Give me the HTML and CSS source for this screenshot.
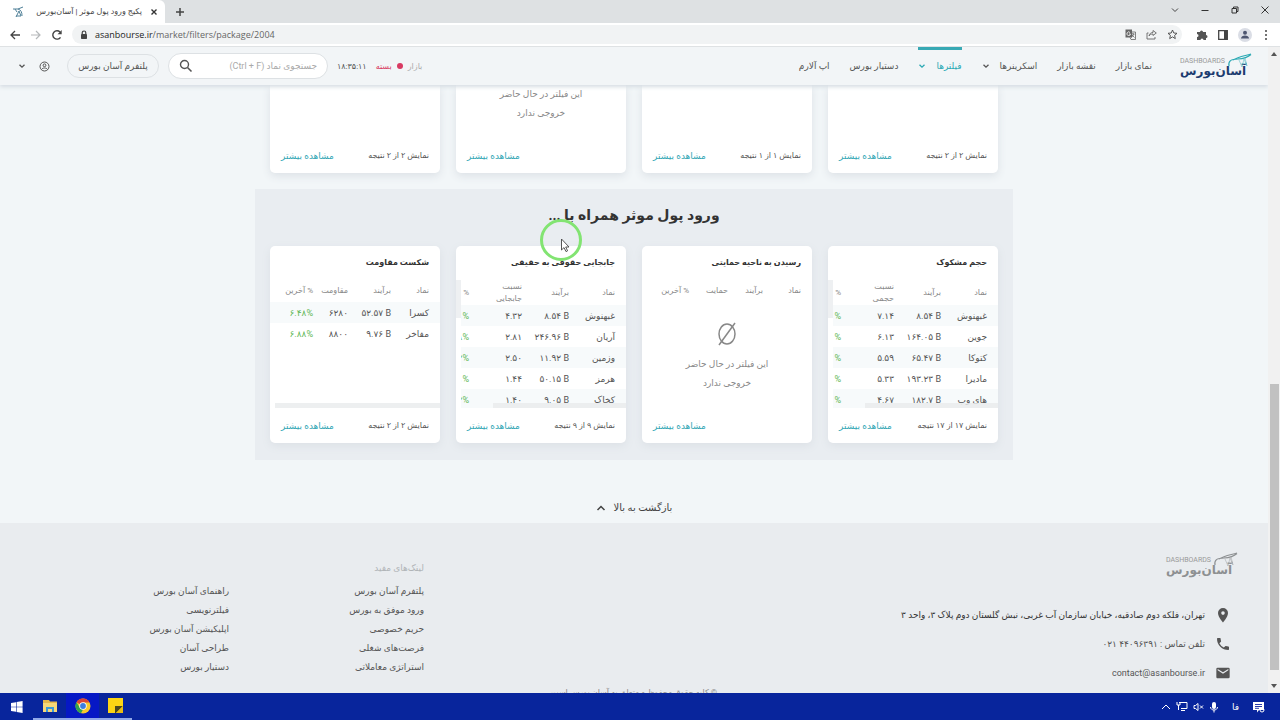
FILE: index.html
```html
<!DOCTYPE html>
<html lang="fa">
<head>
<meta charset="utf-8">
<meta name="viewport" content="width=device-width, initial-scale=1">
<title>پکیج ورود پول موثر | آسان‌بورس</title>
<link rel="stylesheet" href="styles.css">
</head>
<body>
<svg class="defs" aria-hidden="true">
  <symbol id="chev" viewBox="0 0 8 8"><path d="M1.5 2.7 4 5.2l2.500-2.500" fill="none" stroke="currentColor" stroke-width="1.300"/></symbol>
  <symbol id="bird" viewBox="0 0 26 22"><path d="M3 13C2 8 5 6 12 6c5-.3 9-1 13-4.500M7 7c5-3 9-3.500 18-6" fill="none" stroke="currentColor" stroke-width="1.200"/><path d="m13 7 3 7 2-8 3 7-2-8M15 11l6-1" fill="none" stroke="currentColor" stroke-width=".6" opacity=".7"/></symbol>
</svg>

<div class="tabstrip">
  <div class="tab">
    <svg class="favicon" width="12" height="12" viewBox="0 0 12 12"><path d="M1 3h5l5-2M3 3l2 3M6 3c3 1 4 3 4 7M4 11l3-6 2 5H4" fill="none" stroke="#4f8098"/></svg>
    <span class="tab-title" dir="rtl">پکیج ورود پول موثر | آسان‌بورس</span>
    <button class="plain" aria-label="Close tab"><svg width="8" height="8" viewBox="0 0 8 8"><path d="m1.500 1.500 5 5m0-5-5 5" stroke="#333" stroke-width="1.400"/></svg></button>
  </div>
  <button class="plain newtab" aria-label="New tab"><svg width="10" height="10" viewBox="0 0 10 10"><path d="M5 1v8M1 5h8" stroke="#444" stroke-width="1.500"/></svg></button>
  <div class="window-buttons">
    <button class="plain" aria-label="Search tabs"><svg width="10" height="10" viewBox="0 0 10 10"><path d="m2 3.500 3 3 3-3" fill="none" stroke="#444"/></svg></button>
    <button class="plain" aria-label="Minimize"><svg width="10" height="10" viewBox="0 0 10 10"><path d="M1.500 5.500h7" stroke="#333"/></svg></button>
    <button class="plain" aria-label="Restore"><svg width="10" height="10" viewBox="0 0 10 10"><path d="M2 3.500h4.500V8H2zM3.500 3.500V2H8v4.500H6.500" fill="none" stroke="#333"/></svg></button>
    <button class="plain" aria-label="Close"><svg width="10" height="10" viewBox="0 0 10 10"><path d="m1.500 1.500 7 7m0-7-7 7" stroke="#333"/></svg></button>
  </div>
</div>

<div class="toolbar">
  <button class="plain" aria-label="Back"><svg width="12" height="12" viewBox="0 0 12 12"><path d="M11 6H2m4-4L2 6l4 4" fill="none" stroke="#444" stroke-width="1.300"/></svg></button>
  <button class="plain" aria-label="Forward"><svg width="12" height="12" viewBox="0 0 12 12"><path d="M1 6h9M6 2l4 4-4 4" fill="none" stroke="#b5b8ba" stroke-width="1.200"/></svg></button>
  <button class="plain" aria-label="Reload"><svg width="12" height="12" viewBox="0 0 12 12"><path d="M9.500 8.300A4.200 4.200 0 1 1 9 3" fill="none" stroke="#444" stroke-width="1.400"/><path d="M10.700 1v4.200H6.500z" fill="#444"/></svg></button>
  <div class="address">
    <svg width="8" height="10" viewBox="0 0 8 10"><path d="M2.200 4V2.800a1.800 1.800 0 0 1 3.600 0V4" fill="none" stroke="#444" stroke-width="1.200"/><rect x="1" y="4" width="6" height="5" rx=".7" fill="#444"/></svg>
    <div class="url"><span>asanbourse.ir</span>/market/filters/package/2004</div>
    <button class="plain" aria-label="Translate"><svg width="11" height="11" viewBox="0 0 11 11"><rect x=".5" y=".5" width="6.500" height="8" fill="#666"/><path d="M5 3h5.500v7.500H6L5 8.500M6.500 5h3M8 4v1M9 5 6.500 8.500M7 6l2.500 2.500" fill="none" stroke="#666" stroke-width=".8"/><path d="M5 3.500A1.800 1.800 0 1 0 5.500 5H4" fill="none" stroke="#fff" stroke-width=".8"/></svg></button>
    <button class="plain" aria-label="Share"><svg width="11" height="11" viewBox="0 0 11 11"><path d="M2.500 4H1v6h8V8M3 7c.5-2.500 2-3.500 4-3.500V1.500L10.300 4 7 6.500V5C5 5 4 5.500 3 7Z" fill="none" stroke="#666" stroke-width=".9"/></svg></button>
    <button class="plain" aria-label="Bookmark"><svg width="11" height="11" viewBox="0 0 11 11"><path d="m5.500 1 1.300 3 3.200.3-2.400 2.100.7 3.200-2.800-1.700-2.800 1.700.7-3.200L1 4.300 4.200 4z" fill="none" stroke="#444" stroke-width=".9"/></svg></button>
  </div>
  <div class="tools">
    <button class="plain" aria-label="Extensions"><svg width="12" height="12" viewBox="0 0 12 12"><path d="M1 3h3a1.500 1.500 0 1 1 3 0h3v3a1.500 1.500 0 1 1 0 3v2H7.500a1.500 1.500 0 0 0-3 0H1V8a1.500 1.500 0 0 0 0-3z" fill="#555"/></svg></button>
    <button class="plain" aria-label="Side panel"><svg width="12" height="12" viewBox="0 0 12 12"><path d="M1.700 1.700h8.600v8.600H1.700z" fill="none" stroke="#444" stroke-width="1.300"/><path d="M7 2h3.500v8H7z" fill="#444"/></svg></button>
    <button class="plain" aria-label="Profile"><svg width="14" height="14" viewBox="0 0 14 14"><circle cx="7" cy="7" r="7" fill="#dadde5"/><circle cx="7" cy="4.800" r="2" fill="#4d5570"/><path d="M3 10.500c0-4 8-4 8 0z" fill="#4d5570"/></svg></button>
    <button class="plain" aria-label="Menu"><svg width="10" height="12" viewBox="0 0 10 12" fill="#444"><circle cx="5" cy="2" r="1"/><circle cx="5" cy="6" r="1"/><circle cx="5" cy="10" r="1"/></svg></button>
  </div>
</div>

<div class="viewport">
  <div class="page" dir="rtl">
    <header class="site-header">
      <a class="logo" href="#" aria-label="آسان بورس">
        <small>DASHBOARDS</small><b>آسان‌بورس</b>
        <svg width="26" height="22"><use href="#bird"/></svg>
      </a>
      <nav class="nav">
        <a href="#">نمای بازار</a>
        <a href="#">نقشه بازار</a>
        <a href="#">اسکرینرها <svg width="8" height="8"><use href="#chev"/></svg></a>
        <a href="#" class="active">فیلترها <svg width="8" height="8"><use href="#chev"/></svg></a>
        <a href="#">دستیار بورس</a>
        <a href="#">اپ آلارم</a>
      </nav>
      <div class="market"><span class="muted">بازار</span><i class="dot"></i><span class="closed">بسته</span><time>۱۸:۳۵:۱۱</time></div>
      <div class="search">
        <input type="search" aria-label="جستجوی نماد" placeholder="جستجوی نماد (Ctrl + F)">
        <svg width="14" height="14" viewBox="0 0 14 14"><circle cx="5.500" cy="5.500" r="4" fill="none" stroke="#555" stroke-width="1.400"/><path d="m8.500 8.500 4 4" stroke="#555" stroke-width="1.600"/></svg>
      </div>
      <button class="platform">پلتفرم آسان بورس</button>
      <button class="plain account" aria-label="حساب کاربری">
        <svg width="11" height="11" viewBox="0 0 11 11"><circle cx="5.500" cy="5.500" r="4.500" fill="none" stroke="#555"/><circle cx="5.500" cy="4.300" r="1.400" fill="none" stroke="#555"/><path d="M2.500 8.500c1-2 5-2 6 0" fill="none" stroke="#555"/></svg>
        <svg width="8" height="8"><use href="#chev"/></svg>
      </button>
    </header>

    <main>
      <section class="group previous">
        <div class="cards">
          <article class="card"><footer><span>نمایش ۲ از ۲ نتیجه</span><a href="#">مشاهده بیشتر</a></footer></article>
          <article class="card"><footer><span>نمایش ۱ از ۱ نتیجه</span><a href="#">مشاهده بیشتر</a></footer></article>
          <article class="card"><p class="empty-text">این فیلتر در حال حاضر<br>خروجی ندارد</p><footer><a href="#">مشاهده بیشتر</a></footer></article>
          <article class="card"><footer><span>نمایش ۲ از ۲ نتیجه</span><a href="#">مشاهده بیشتر</a></footer></article>
        </div>
      </section>

      <section class="group current">
        <h2>ورود پول موثر همراه با ...</h2>
        <div class="cards">
          <article class="card">
            <h3>حجم مشکوک</h3>
            <div class="scroll wide">
              <table>
                <colgroup><col class="c-name"><col class="c-net"><col class="c-ratio"><col></colgroup>
                <thead><tr><th>نماد</th><th>برآیند</th><th>نسبت<br>حجمی</th><th>%</th></tr></thead>
                <tbody>
                  <tr><td>غبهنوش</td><td dir="ltr">۸.۵۴ B</td><td dir="ltr">۷.۱۴</td><td dir="ltr" class="up">%</td></tr>
                  <tr><td>جوین</td><td dir="ltr">۱۶۴.۰۵ B</td><td dir="ltr">۶.۱۳</td><td dir="ltr" class="up">%</td></tr>
                  <tr><td>کتوکا</td><td dir="ltr">۶۵.۴۷ B</td><td dir="ltr">۵.۵۹</td><td dir="ltr" class="up">%</td></tr>
                  <tr><td>مادیرا</td><td dir="ltr">۱۹۳.۲۳ B</td><td dir="ltr">۵.۳۳</td><td dir="ltr" class="up">%</td></tr>
                  <tr><td>های وب</td><td dir="ltr">۱۸۲.۷ B</td><td dir="ltr">۴.۶۷</td><td dir="ltr" class="up">%</td></tr>
                </tbody>
              </table>
              <i class="hthumb"></i><i class="vtrack"></i>
            </div>
            <footer><span>نمایش ۱۷ از ۱۷ نتیجه</span><a href="#">مشاهده بیشتر</a></footer>
          </article>

          <article class="card">
            <h3>رسیدن به ناحیه حمایتی</h3>
            <div class="scroll">
              <table>
                <colgroup><col class="c-short"><col class="c-level"><col class="c-support"><col></colgroup>
                <thead><tr><th>نماد</th><th>برآیند</th><th>حمایت</th><th>% آخرین</th></tr></thead>
              </table>
              <div class="empty">
                <svg width="20" height="24" viewBox="0 0 20 24"><ellipse cx="10" cy="12" rx="8" ry="10" fill="none" stroke="#888" stroke-width="1.500"/><path d="M2 23 18 1" stroke="#888" stroke-width="1.500"/></svg>
                <p class="empty-text">این فیلتر در حال حاضر<br>خروجی ندارد</p>
              </div>
            </div>
            <footer><a href="#">مشاهده بیشتر</a></footer>
          </article>

          <article class="card">
            <h3>جابجایی حقوقی به حقیقی</h3>
            <div class="scroll wide">
              <table>
                <colgroup><col class="c-name"><col class="c-net"><col class="c-ratio"><col></colgroup>
                <thead><tr><th>نماد</th><th>برآیند</th><th>نسبت<br>جابجایی</th><th>%</th></tr></thead>
                <tbody>
                  <tr><td>غبهنوش</td><td dir="ltr">۸.۵۴ B</td><td dir="ltr">۴.۳۲</td><td dir="ltr" class="up">۱%</td></tr>
                  <tr><td>آریان</td><td dir="ltr">۲۴۶.۹۶ B</td><td dir="ltr">۲.۸۱</td><td dir="ltr" class="up">۸%</td></tr>
                  <tr><td>وزمین</td><td dir="ltr">۱۱.۹۲ B</td><td dir="ltr">۲.۵۰</td><td dir="ltr" class="up">۲%</td></tr>
                  <tr><td>هرمز</td><td dir="ltr">۵۰.۱۵ B</td><td dir="ltr">۱.۴۴</td><td dir="ltr" class="up">۱%</td></tr>
                  <tr><td>کخاک</td><td dir="ltr">۹.۰۵ B</td><td dir="ltr">۱.۴۰</td><td dir="ltr" class="up">۲%</td></tr>
                </tbody>
              </table>
              <i class="hthumb"></i><i class="vtrack"></i>
            </div>
            <footer><span>نمایش ۹ از ۹ نتیجه</span><a href="#">مشاهده بیشتر</a></footer>
          </article>

          <article class="card">
            <h3>شکست مقاومت</h3>
            <div class="scroll">
              <table>
                <colgroup><col class="c-short"><col class="c-mid"><col class="c-level"><col></colgroup>
                <thead><tr><th>نماد</th><th>برآیند</th><th>مقاومت</th><th>% آخرین</th></tr></thead>
                <tbody>
                  <tr><td>کسرا</td><td dir="ltr">۵۲.۵۷ B</td><td dir="ltr">۶۲۸۰</td><td dir="ltr" class="up">۶.۴۸%</td></tr>
                  <tr><td>مفاخر</td><td dir="ltr">۹.۷۶ B</td><td dir="ltr">۸۸۰۰</td><td dir="ltr" class="up">۶.۸۸%</td></tr>
                </tbody>
              </table>
              <i class="hthumb full"></i>
            </div>
            <footer><span>نمایش ۲ از ۲ نتیجه</span><a href="#">مشاهده بیشتر</a></footer>
          </article>
        </div>
      </section>

      <button class="plain back-top">بازگشت به بالا <svg width="10" height="10" viewBox="0 0 10 10"><path d="m1.500 7 3.500-3.500L8.500 7" fill="none" stroke="currentColor" stroke-width="1.500"/></svg></button>
    </main>

    <footer class="site-footer">
      <div class="footer-main">
        <address>
          <a class="logo gray" href="#" aria-label="آسان بورس">
            <small>DASHBOARDS</small><b>آسان‌بورس</b>
            <svg width="26" height="22"><use href="#bird"/></svg>
          </a>
          <p><svg width="16" height="16" viewBox="0 0 16 16"><path fill-rule="evenodd" d="M8 1a5 5 0 0 0-5 5c0 4 5 9.500 5 9.500S13 10 13 6a5 5 0 0 0-5-5m0 3.300a1.800 1.800 0 1 1 0 3.600 1.800 1.800 0 0 1 0-3.600" fill="#555"/></svg><strong>تهران، فلکه دوم صادقیه، خیابان سازمان آب غربی، نبش گلستان دوم پلاک ۳، واحد ۳</strong></p>
          <p><svg width="16" height="16" viewBox="0 0 24 24"><path d="M6.600 10.800a15 15 0 0 0 6.600 6.600l2.200-2.200c.3-.3.700-.4 1-.2 1.100.4 2.300.6 3.600.6.600 0 1 .4 1 1V20c0 .6-.4 1-1 1A17 17 0 0 1 3 4c0-.6.400-1 1-1h3.500c.6 0 1 .4 1 1 0 1.300.2 2.500.6 3.600.1.300 0 .7-.2 1z" fill="#555"/></svg><span>تلفن تماس : <bdo dir="ltr">۰۲۱ ۴۴۰۹۶۳۹۱</bdo></span></p>
          <p><svg width="16" height="16" viewBox="0 0 24 24"><path d="M20 4H4a2 2 0 0 0-2 2v12c0 1.100.9 2 2 2h16a2 2 0 0 0 2-2V6a2 2 0 0 0-2-2m0 4-8 5-8-5V6l8 5 8-5z" fill="#555"/></svg><a href="#">contact@asanbourse.ir</a></p>
        </address>
        <div class="links">
          <h4>لینک‌های مفید</h4>
          <a href="#">پلتفرم آسان بورس</a><a href="#">راهنمای آسان بورس</a>
          <a href="#">ورود موفق به بورس</a><a href="#">فیلترنویسی</a>
          <a href="#">حریم خصوصی</a><a href="#">اپلیکیشن آسان بورس</a>
          <a href="#">فرصت‌های شغلی</a><a href="#">طراحی آسان</a>
          <a href="#">استراتژی معاملاتی</a><a href="#">دستیار بورس</a>
        </div>
      </div>
      <p class="copyright">© کلیه حقوق محفوظ و متعلق به آسان بورس است</p>
    </footer>
  </div>
  <div class="scrollbar">
    <svg width="6" height="4" viewBox="0 0 6 4"><path d="m3 0 3 4H0z" fill="#555"/></svg>
    <i class="thumb"></i>
    <svg width="6" height="4" viewBox="0 0 6 4"><path d="m3 4 3-4H0z" fill="#555"/></svg>
  </div>
</div>

<div class="taskbar">
  <button class="plain task" aria-label="Start"><svg width="12" height="12" viewBox="0 0 12 12" fill="#fff"><path d="m0 2 5-.8v4.500H0zM5.600 1l6-1v5.700h-6zM0 6.300h5v4.500L0 10zM5.600 6.300h6V12l-6-1z"/></svg></button>
  <button class="plain task open" aria-label="File Explorer"><svg width="16" height="14" viewBox="0 0 16 14"><path d="M1 1h6l1 1.500h7V12H1z" fill="#e5b74c"/><path d="M1 4h14v9H1z" fill="#f6d778"/><path d="M4 13V8h8v5h-2v-3H6v3z" fill="#3b9ad8"/></svg></button>
  <button class="plain task open chrome" aria-label="Chrome"><svg width="16" height="16" viewBox="0 0 16 16"><circle cx="8" cy="8" r="7.500" fill="#f8c82c"/><path d="M8 8 1.500 4.200a7.500 7.500 0 0 1 13 .3H8z" fill="#dc4436"/><path d="M1.500 4.200 5 10l3 1.500-2 3.800A7.500 7.500 0 0 1 1.500 4.200" fill="#2fa152"/><circle cx="8" cy="8" r="3.700" fill="#fff"/><circle cx="8" cy="8" r="2.900" fill="#3d7de0"/></svg></button>
  <button class="plain task open" aria-label="Sticky Notes"><svg width="15" height="15" viewBox="0 0 15 15"><path d="M0 0h15v9l-6 6H0z" fill="#fcd514"/><path d="M7 8h8l-7 7H7z" fill="#4b4820"/><path d="m15 8-7 7h7z" fill="#e9bd11"/></svg></button>
  <div class="tray">
    <svg width="10" height="10" viewBox="0 0 10 10"><path d="m1 7 4-4 4 4" fill="none" stroke="#fff"/></svg>
    <svg width="12" height="11" viewBox="0 0 12 11"><path d="M3 1.500h8v6H5M1 1v3h3V1M2.500 4v5M5 9.500h4" fill="none" stroke="#fff"/></svg>
    <svg width="11" height="10" viewBox="0 0 11 10"><path d="M1 3.500h1.500L5 1.500v7L2.500 6.500H1zM7 3.500l3 3m0-3-3 3" fill="none" stroke="#fff"/></svg>
    <svg width="10" height="12" viewBox="0 0 10 12"><rect x="3" y="1" width="4" height="7" rx="2" fill="#fff"/><path d="M1.500 6c0 4 7 4 7 0M5 9v2.500" fill="none" stroke="#fff"/></svg>
    <span>فا</span>
    <svg class="notice" width="13" height="12" viewBox="0 0 13 12"><path d="M1 1h11v8H7l-2 2.500V9H1z" fill="#fff"/><path d="M3 3.500h7M3 5.500h7M3 7.300h4" stroke="#1025a0" stroke-width=".9"/><circle cx="10" cy="9" r="2" fill="none" stroke="#fff"/></svg>
  </div>
</div>

<svg class="pointer" width="44" height="44" viewBox="0 0 44 44" aria-hidden="true"><circle cx="22" cy="22" r="19.500" fill="none" stroke="#82e472" stroke-width="3"/><path d="M22.500 21v11l2.500-2.400 2 4 1.600-.8-1.900-3.800h3.300z" fill="#fff" stroke="#444" stroke-width=".9"/></svg>
</body>
</html>
```

FILE: styles.css
```css
* { box-sizing: border-box; }
body {
  margin: 0;
  height: 100vh;
  display: flex;
  flex-direction: column;
  position: relative;
  overflow: hidden;
  background: #fff;
  color: #555;
  font-family: Roboto, "DejaVu Sans", sans-serif;
  font-size: 9px;
}
a { color: inherit; text-decoration: none; }
p, h2, h3, h4 { margin: 0; }
button, input { font: inherit; color: inherit; }
svg { display: block; flex: none; }
.defs { position: absolute; width: 0; height: 0; }
.plain { border: 0; padding: 0; background: none; display: flex; align-items: center; justify-content: center; }

/* Browser chrome */
.tabstrip { flex: none; height: 23px; display: flex; align-items: center; background: #dee1e3; }
.tab { width: 165px; height: 23px; padding: 0 7px 0 12px; display: flex; align-items: center; gap: 8px; background: #fff; border-radius: 0 6px 0 0; }
.tab-title { flex: 1; white-space: nowrap; font-size: 8px; color: #444; }
.newtab { width: 30px; }
.window-buttons { margin-left: auto; display: flex; gap: 20px; padding: 0 10px 4px 0; }
.toolbar { flex: none; height: 24px; padding: 0 9px; display: flex; align-items: center; gap: 9px; border-bottom: 1px solid #dfe2e4; }
.address { flex: 1; height: 19px; padding: 0 4px 0 8px; display: flex; align-items: center; gap: 10px; background: #f1f3f4; border-radius: 10px; }
.address > svg { margin-right: -3px; }
.url { flex: 1; font-family: "Open Sans", sans-serif; font-size: 9px; color: #666; }
.url span { color: #222; }
.tools { display: flex; align-items: center; gap: 9px; padding-left: 5px; }

/* Window */
.viewport { flex: 1; min-height: 0; display: flex; }
.page { flex: 1; min-width: 0; display: flex; flex-direction: column; overflow: hidden; background: #f2f6f8; }
.scrollbar { flex: none; width: 12px; padding: 5px 0; display: flex; flex-direction: column; align-items: center; justify-content: space-between; background: #f1f1f1; }
.thumb { width: 9px; height: 286px; margin-top: auto; margin-bottom: 14px; background: #c1c1c1; }

.site-header { flex: none; height: 38px; padding: 0 16px; display: flex; align-items: center; background: #f2f5f7; box-shadow: 0 2px 4px #d5dce2; position: relative; z-index: 1; }
.logo { display: flex; flex-direction: column; align-items: flex-end; position: relative; width: 72px; height: 26px; color: #2ba9b4; }
.logo small { direction: ltr; font-size: 7px; line-height: 8px; padding-top: 4px; color: #999; }
.logo b { white-space: nowrap; font-size: 12px; line-height: 12px; color: #1d3c70; }
.logo svg { position: absolute; right: 0; top: 0; }
.logo.gray, .logo.gray b { color: #8d9092; }
.nav { align-self: stretch; display: flex; gap: 20px; margin-right: 28px; white-space: nowrap; }
.nav a { display: flex; align-items: center; gap: 10px; }
.nav .active { color: #2ba9b4; box-shadow: inset 0 3px #38a9b4; }
.market { display: flex; align-items: center; gap: 5px; margin-right: auto; white-space: nowrap; font-size: 8px; }
.market .muted { color: #aaa; }
.market .closed { color: #d83a62; }
.market time { margin-right: 4px; }
.dot { width: 6px; height: 6px; border-radius: 50%; background: #d83a62; }
.search { width: 160px; height: 26px; margin: 0 9px; padding: 0 10px; display: flex; align-items: center; background: #fff; border: 1px solid #dde1e4; border-radius: 13px; }
.search input { flex: 1; min-width: 0; border: 0; padding: 0; outline: 0; background: none; }
.search input::placeholder { color: #aaa; }
.platform { width: 92px; height: 24px; padding: 0; white-space: nowrap; background: none; border: 1px solid #dde1e4; border-radius: 12px; }
.account { gap: 13px; margin: 0 17px 0 2px; }

main { flex: none; display: flex; flex-direction: column; }
.group { width: 100%; max-width: 758px; margin: 0 auto; padding: 0 15px 16px; }
.current { background: #e9edf1; padding-bottom: 17px; }
.cards { display: grid; grid-template-columns: repeat(4, minmax(0, 1fr)); gap: 16px; }
.card { display: flex; flex-direction: column; overflow: hidden; background: #fff; border-radius: 5px; box-shadow: 0 3px 8px #dce1e6; }
.previous .card { min-height: 88px; border-radius: 0 0 5px 5px; }
.card footer { margin-top: auto; height: 35px; padding: 0 11px; display: flex; align-items: center; justify-content: space-between; white-space: nowrap; font-size: 8px; }
.card footer a { margin-right: auto; font-size: 9px; color: #34a7b5; }
.group h2 { padding: 14px 0 18px; text-align: center; font-size: 14px; line-height: 25px; color: #333; }
.card h3 { height: 34px; padding: 0 11px; white-space: nowrap; font-size: 8px; line-height: 34px; color: #333; }
.scroll { height: 128px; position: relative; overflow: hidden; }
table { width: 100%; table-layout: fixed; border-collapse: collapse; }
th { height: 22px; padding: 0; text-align: right; white-space: nowrap; font-size: 8px; font-weight: 400; line-height: 12px; color: #888; }
.wide th { height: 25px; padding-top: 1px; }
td { height: 21px; padding: 0; text-align: right; white-space: nowrap; font-size: 9px; }
th:first-child, td:first-child { padding-right: 11px; }
tbody tr:nth-child(odd) { background: #f7fafb; }
.up { color: #62b856; }
.c-name { width: 57px; }
.c-net { width: 47px; }
.c-ratio { width: 53px; }
.c-short { width: 49px; }
.c-mid { width: 43px; }
.c-level { width: 35px; }
.c-support { width: 39px; }
.hthumb { position: absolute; right: 0; bottom: 0; width: 133px; height: 5px; background: #e9ebec; opacity: .8; }
.hthumb.full { width: 97%; }
.vtrack { position: absolute; left: 0; top: 0; width: 5px; height: 100%; background: linear-gradient(#eef0f2 38px, #fff 38px); }
.empty { display: flex; flex-direction: column; align-items: center; gap: 9px; padding-top: 20px; }
.empty-text { text-align: center; line-height: 19px; color: #888; }
.back-top { align-self: center; gap: 8px; padding: 41px 0 8px; font-size: 10px; line-height: 14px; color: #444; }

.site-footer { flex: 1; background: #e9ecef; }
.footer-main { height: 163px; padding: 29px 30px 0 34px; display: flex; }
address { flex: 1; font-style: normal; padding-right: 7px; }
address .logo { margin: 0 -7px 22px 0; }
address p { height: 29px; display: flex; align-items: center; gap: 10px; white-space: nowrap; }
address strong { font-weight: 400; color: #333; }
.links { display: grid; grid-template-columns: 195px 195px; grid-template-rows: 30px; grid-auto-rows: 19px; align-content: start; line-height: 19px; }
.links h4 { grid-column: 1 / 3; padding-top: 7px; font-weight: 400; font-size: 9px; line-height: 19px; color: #b0b4b7; }
.copyright { text-align: center; font-size: 8px; line-height: 14px; color: #888; }

/* Desktop taskbar */
.taskbar { flex: none; height: 27px; display: flex; align-items: stretch; background: #08259c; color: #fff; }
.task { width: 33px; }
.task.open { border-bottom: 2px solid #91a9e8; }
.task.chrome { background: #0618c5; }
.tray { margin-left: auto; padding-right: 15px; display: flex; align-items: center; gap: 5px; }
.tray span { margin: 0 8px; }

.pointer { position: absolute; left: 539px; top: 218px; z-index: 2; }
```
